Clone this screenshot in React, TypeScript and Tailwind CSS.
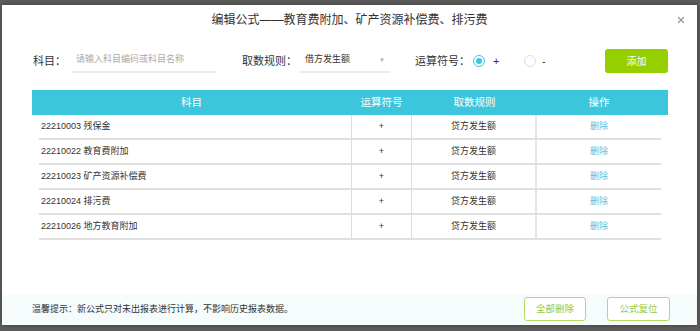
import { X } from 'lucide-react';

const ROWS = [
  { code: '22210003', name: '残保金' },
  { code: '22210022', name: '教育费附加' },
  { code: '22210023', name: '矿产资源补偿费' },
  { code: '22210024', name: '排污费' },
  { code: '22210026', name: '地方教育附加' },
];

const FONT = { fontFamily: '"Liberation Sans", "Noto Sans CJK SC", sans-serif' };

export default function App() {
  return (
    <div className="h-[331px] w-[700px] overflow-hidden bg-[#5b5b5b] pl-[2px] pt-[5px]" style={FONT}>
      <div className="flex h-[320px] w-[695px] flex-col bg-white shadow-[0_0_4px_rgba(0,0,0,0.3)]">
        {/* title */}
        <div className="relative flex h-[30px] items-center justify-center">
          <h2 className="text-[12px] text-[#333]">编辑公式——教育费附加、矿产资源补偿费、排污费</h2>
          <button className="absolute right-[11px] top-[10px] text-[#999]" aria-label="Close">
            <X className="h-[10px] w-[10px]" strokeWidth={3} />
          </button>
        </div>

        {/* form */}
        <div className="mt-[14px] flex h-[24px] items-center whitespace-nowrap pl-[31px] text-[11px] text-[#333]">
          <span className="w-[38px] shrink-0">科目：</span>
          <div className="flex h-[24px] w-[146px] shrink-0 items-center border-b-2 border-[#ececec] pl-[5px] text-[9px] text-[#aaa]">
            请输入科目编码或科目名称
          </div>
          <span className="ml-[25px] w-[57px] shrink-0">取数规则：</span>
          <div className="flex h-[24px] w-[91px] shrink-0 items-center justify-between border-b-2 border-[#ececec] pl-[6px] pr-[5px] text-[9px] text-[#333]">
            借方发生额
            <span className="text-[6px] text-[#aaa]">▼</span>
          </div>
          <span className="ml-[25px] w-[58px] shrink-0">运算符号：</span>
          <span className="flex h-[12px] w-[12px] shrink-0 items-center justify-center rounded-full border border-[#3cc6dc]">
            <span className="h-[6px] w-[6px] rounded-full bg-[#3cc6dc]" />
          </span>
          <span className="w-[39px] shrink-0 pl-[8px]">+</span>
          <span className="h-[12px] w-[12px] shrink-0 rounded-full border border-[#ddd]" />
          <span className="w-[69px] shrink-0 pl-[6px]">-</span>
          <button className="h-[24px] w-[63px] shrink-0 rounded-[3px] bg-[#95cf00] text-[10px] text-white">
            添加
          </button>
        </div>

        {/* table */}
        <div className="ml-[30px] mt-[17px] w-[636px]">
          <div className="flex h-[25px] items-center bg-[#3cc6dc] text-[10.5px] text-white">
            <div className="w-[319px] text-center">科目</div>
            <div className="w-[61px] text-center">运算符号</div>
            <div className="w-[125px] text-center">取数规则</div>
            <div className="w-[124px] text-center">操作</div>
          </div>
          {ROWS.map((r) => (
            <div key={r.code} className="ml-[7px] flex h-[25px] w-[622px] items-center border-b-2 border-[#e0e0e0] text-[9px] text-[#333]">
              <div className="flex h-full w-[312px] items-center pl-[2px]">
                {r.code} {r.name}
              </div>
              <div className="flex h-full w-[61px] items-center justify-center border-x border-[#ddd]">+</div>
              <div className="flex h-full w-[125px] items-center justify-center border-r-2 border-[#e6e6e6]">贷方发生额</div>
              <div className="flex-1 text-center text-[#5bbde0]">删除</div>
            </div>
          ))}
        </div>

        {/* footer */}
        <div className="mt-auto flex h-[30px] items-start bg-[#f6fbfc] pl-[30px] pr-[27px] pt-[2px]">
          <span className="flex-1 self-center pb-[2px] text-[9px] text-[#333]">
            温馨提示：新公式只对未出报表进行计算，不影响历史报表数据。
          </span>
          <button className="h-[24px] w-[62px] rounded-[3px] border border-[#b2dc62] bg-white text-[9.5px] text-[#94c940]">
            全部删除
          </button>
          <button className="ml-[21px] h-[24px] w-[63px] rounded-[3px] border border-[#b2dc62] bg-white text-[9.5px] text-[#94c940]">
            公式复位
          </button>
        </div>
      </div>
    </div>
  );
}
